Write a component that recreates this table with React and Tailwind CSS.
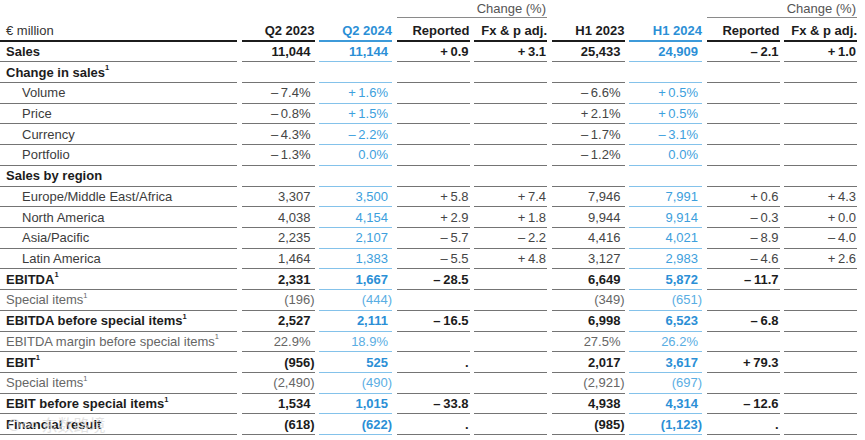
import React from "react";

const M = "\u2013\u2009";
const P = "+\u2009";

const rows = [
  { label: "Sales", type: "bold", v: ["11,044", "11,144", P + "0.9", P + "3.1", "25,433", "24,909", M + "2.1", P + "1.0"] },
  { label: "Change in sales", sup: true, type: "bold", v: [] },
  { label: "Volume", type: "sub", v: [M + "7.4%", P + "1.6%", "", "", M + "6.6%", P + "0.5%", "", ""] },
  { label: "Price", type: "sub", v: [M + "0.8%", P + "1.5%", "", "", P + "2.1%", P + "0.5%", "", ""] },
  { label: "Currency", type: "sub", v: [M + "4.3%", M + "2.2%", "", "", M + "1.7%", M + "3.1%", "", ""] },
  { label: "Portfolio", type: "sub", v: [M + "1.3%", "0.0%", "", "", M + "1.2%", "0.0%", "", ""] },
  { label: "Sales by region", type: "bold", v: [] },
  { label: "Europe/Middle East/Africa", type: "sub", v: ["3,307", "3,500", P + "5.8", P + "7.4", "7,946", "7,991", P + "0.6", P + "4.3"] },
  { label: "North America", type: "sub", v: ["4,038", "4,154", P + "2.9", P + "1.8", "9,944", "9,914", M + "0.3", P + "0.0"] },
  { label: "Asia/Pacific", type: "sub", v: ["2,235", "2,107", M + "5.7", M + "2.2", "4,416", "4,021", M + "8.9", M + "4.0"] },
  { label: "Latin America", type: "sub", v: ["1,464", "1,383", M + "5.5", P + "4.8", "3,127", "2,983", M + "4.6", P + "2.6"] },
  { label: "EBITDA", sup: true, type: "bold", v: ["2,331", "1,667", M + "28.5", "", "6,649", "5,872", M + "11.7", ""] },
  { label: "Special items", sup: true, type: "gray", v: ["(196)", "(444)", "", "", "(349)", "(651)", "", ""] },
  { label: "EBITDA before special items", sup: true, type: "bold", v: ["2,527", "2,111", M + "16.5", "", "6,998", "6,523", M + "6.8", ""] },
  { label: "EBITDA margin before special items", sup: true, type: "gray", v: ["22.9%", "18.9%", "", "", "27.5%", "26.2%", "", ""] },
  { label: "EBIT", sup: true, type: "bold", v: ["(956)", "525", ".", "", "2,017", "3,617", P + "79.3", ""] },
  { label: "Special items", sup: true, type: "gray", v: ["(2,490)", "(490)", "", "", "(2,921)", "(697)", "", ""] },
  { label: "EBIT before special items", sup: true, type: "bold", v: ["1,534", "1,015", M + "33.8", "", "4,938", "4,314", M + "12.6", ""] },
  { label: "Financial result", type: "bold", v: ["(618)", "(622)", ".", "", "(985)", "(1,123)", ".", ""] },
];

const GRID = "grid grid-cols-[237px_repeat(8,73px)] gap-x-[4.5px]";

function labelClass(type) {
  if (type === "bold") return "font-bold text-[#1c1c1c] pl-[6px]";
  if (type === "gray") return "text-[#666666] pl-[6px]";
  return "text-[#3c3c3c] pl-[22px]";
}

function valueClass(type, blue) {
  if (blue) {
    if (type === "bold") return "font-bold text-[#2b8fd6]";
    if (type === "gray") return "text-[#5aaee3]";
    return "text-[#3d9fdd]";
  }
  if (type === "bold") return "font-bold text-[#1c1c1c]";
  if (type === "gray") return "text-[#666666]";
  return "text-[#454545]";
}

function DataRow({ row }) {
  return (
    <div className={GRID}>
      <div className={"h-[20.72px] border-b border-[#747474] flex items-center whitespace-nowrap " + labelClass(row.type)}>
        {row.label}
        {row.sup ? <span className="text-[7.5px] leading-[8px] relative top-[-4px]">1</span> : null}
      </div>
      {Array.from({ length: 8 }).map((_, i) => {
        const val = row.v[i] || "";
        const blue = i === 1 || i === 5;
        const isYear = i === 0 || i === 1 || i === 4 || i === 5;
        const paren = val.startsWith("(");
        const pr = isYear ? (paren ? "pr-0" : "pr-[4px]") : "pr-[1px]";
        return (
          <div
            key={i}
            className={
              "h-[20.72px] border-b flex items-center justify-end whitespace-nowrap " +
              (blue ? "border-[#84c2ea] " : "border-[#747474] ") +
              pr +
              " " +
              valueClass(row.type, blue)
            }
          >
            {val}
          </div>
        );
      })}
    </div>
  );
}

export default function App() {
  const heads = ["Q2 2023", "Q2 2024", "Reported", "Fx & p adj.", "H1 2023", "H1 2024", "Reported", "Fx & p adj."];
  return (
    <div className="relative w-[865px] h-[440px] bg-white overflow-hidden font-['Liberation_Sans',Arial,sans-serif] text-[13px] leading-[15px]">
      <div className={GRID}>
        <div className="h-[18px]" />
        <div className="h-[18px]" />
        <div className="h-[18px]" />
        <div className="col-span-2 h-[18px] border-b border-[#8a8a8a] flex items-center justify-end text-[#555] pr-[1px]">
          Change (%)
        </div>
        <div className="h-[18px]" />
        <div className="h-[18px]" />
        <div className="col-span-2 h-[18px] border-b border-[#8a8a8a] flex items-center justify-end text-[#555] pr-[1px]">
          Change (%)
        </div>
      </div>
      <div className={GRID}>
        <div className="h-[23.5px] border-b-2 border-[#1c1c1c] flex items-end pb-[1.5px] pl-[6px] text-[#333]">
          € million
        </div>
        {heads.map((h, i) => {
          const blue = i === 1 || i === 5;
          return (
            <div
              key={i}
              className={
                "h-[23.5px] border-b-2 flex items-end justify-end pb-[1.5px] font-bold whitespace-nowrap " +
                (blue ? "border-[#3d9ad9] text-[#2b8fd6]" : "border-[#1c1c1c] text-[#1c1c1c]")
              }
            >
              {h}
            </div>
          );
        })}
      </div>
      {rows.map((r, idx) => (
        <DataRow key={idx} row={r} />
      ))}
      <div className="absolute left-[6px] top-[414px] text-[16px] leading-[20px] text-[#d8d8d8] opacity-70 font-['Noto_Sans_CJK_SC',sans-serif] pointer-events-none">
        ⊙∞ 东数路境
      </div>
    </div>
  );
}
